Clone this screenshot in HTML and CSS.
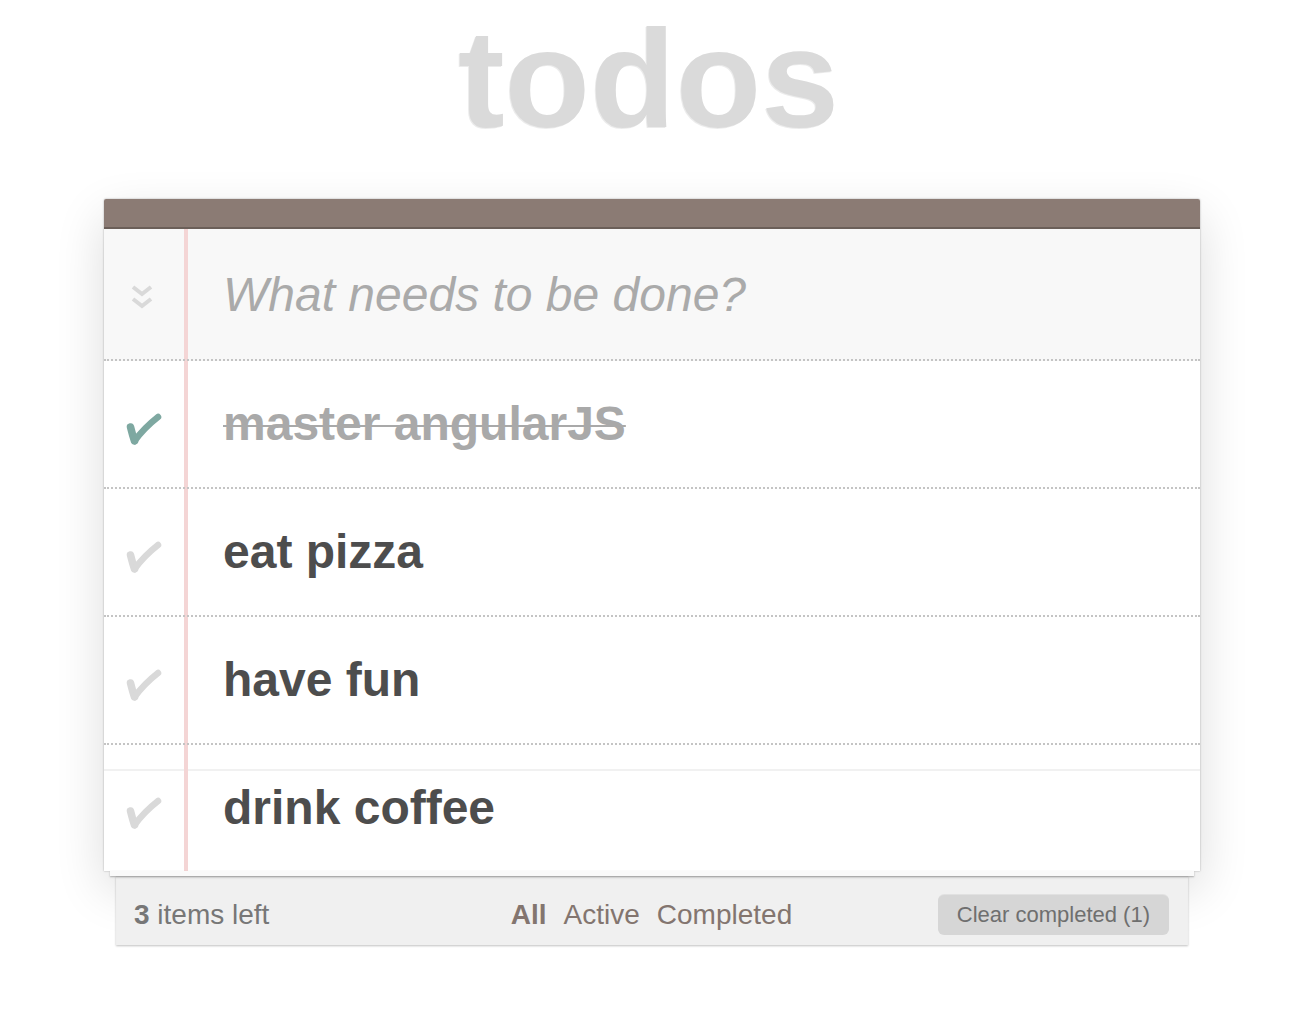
FILE: index.html
```html
<!DOCTYPE html>
<html lang="en">
<head>
<meta charset="utf-8">
<title>todos</title>
<link rel="stylesheet" href="styles.css">
</head>
<body>
<section class="todoapp">
  <h1 class="title">todos</h1>
  <div class="app">
    <div class="panel">
      <div class="panel-bar"></div>
      <div class="row row-new">
        <div class="gutter gutter-toggle">
          <svg class="chevrons" width="22" height="26" viewBox="0 0 22 26"><path d="M2 4 L11 11 L20 4 M2 16 L11 23 L20 16" fill="none" stroke="#d9d9d9" stroke-width="4"/></svg>
        </div>
        <input class="new-todo" type="text" placeholder="What needs to be done?">
      </div>
      <ul class="list">
        <li class="row item done">
          <div class="gutter gutter-check"><svg class="check" width="40" height="40" viewBox="0 0 40 40"><path d="M8.5 18 Q10.5 26 12.5 32" fill="none" stroke="currentColor" stroke-width="7.5" stroke-linecap="round"/><path d="M12.5 32 Q22 19 36 8" fill="none" stroke="currentColor" stroke-width="6.5" stroke-linecap="round"/></svg></div>
          <label class="label">master angularJS</label>
        </li>
        <li class="row item">
          <div class="gutter gutter-check"><svg class="check" width="40" height="40" viewBox="0 0 40 40"><path d="M8.5 18 Q10.5 26 12.5 32" fill="none" stroke="currentColor" stroke-width="7.5" stroke-linecap="round"/><path d="M12.5 32 Q22 19 36 8" fill="none" stroke="currentColor" stroke-width="6.5" stroke-linecap="round"/></svg></div>
          <label class="label">eat pizza</label>
        </li>
        <li class="row item">
          <div class="gutter gutter-check"><svg class="check" width="40" height="40" viewBox="0 0 40 40"><path d="M8.5 18 Q10.5 26 12.5 32" fill="none" stroke="currentColor" stroke-width="7.5" stroke-linecap="round"/><path d="M12.5 32 Q22 19 36 8" fill="none" stroke="currentColor" stroke-width="6.5" stroke-linecap="round"/></svg></div>
          <label class="label">have fun</label>
        </li>
        <li class="row item last">
          <div class="gutter gutter-check"><svg class="check" width="40" height="40" viewBox="0 0 40 40"><path d="M8.5 18 Q10.5 26 12.5 32" fill="none" stroke="currentColor" stroke-width="7.5" stroke-linecap="round"/><path d="M12.5 32 Q22 19 36 8" fill="none" stroke="currentColor" stroke-width="6.5" stroke-linecap="round"/></svg></div>
          <label class="label">drink coffee</label>
        </li>
      </ul>
    </div>
    <div class="sheet"></div>
    <footer class="footer">
      <span class="count"><strong>3</strong> items left</span>
      <ul class="filters">
        <li><a class="filter selected">All</a></li>
        <li><a class="filter">Active</a></li>
        <li><a class="filter">Completed</a></li>
      </ul>
      <button class="clear" type="button">Clear completed (1)</button>
    </footer>
  </div>
</section>
</body>
</html>
```

FILE: styles.css
```css
html, body {
  margin: 0;
  padding: 0;
  background: #ffffff;
}

body {
  font-family: "Liberation Sans", Arial, Helvetica, sans-serif;
  color: #4d4d4d;
}

.todoapp {
  width: 1096px;
  margin: 0 auto;
  padding-bottom: 60px;
  position: relative;
  left: -1px;
}

.title {
  margin: 9px 0 0;
  padding-right: 7px;
  font-size: 140px;
  line-height: 140px;
  font-weight: 700;
  text-align: center;
  color: #dadada;
  text-shadow: -1px 1px 0 rgba(0, 0, 0, 0.08);
}

.app {
  margin-top: 50px;
}

.panel {
  background: #ffffff;
  box-shadow: 0 0 2px rgba(0, 0, 0, 0.35), 0 18px 50px rgba(0, 0, 0, 0.14);
  border-radius: 2px 2px 0 0;
}

.panel-bar {
  height: 28px;
  background: #8b7b74;
  border-bottom: 2px solid #6b5f59;
  border-radius: 2px 2px 0 0;
}

.row {
  display: flex;
  align-items: center;
  background-image: linear-gradient(to right, transparent 80px, #f4d5d5 80px, #f4d5d5 84px, transparent 84px);
}

.row-new {
  height: 130px;
  background-color: #f8f8f8;
  border-bottom: 2px dotted #c4c4c4;
}

.gutter {
  width: 84px;
  flex: none;
  display: flex;
  align-items: center;
}

.gutter-toggle {
  padding-left: 27px;
  box-sizing: border-box;
  margin-top: 4px;
}

.chevrons {
  display: block;
}

.new-todo {
  flex: 1;
  border: 0;
  outline: none;
  background: transparent;
  margin: 0 0 0 35px;
  padding: 0;
  font-family: "Liberation Sans", Arial, Helvetica, sans-serif;
  font-size: 48px;
  font-style: italic;
  color: #4d4d4d;
  height: 60px;
}

.new-todo::placeholder {
  color: #aaaaaa;
  font-style: italic;
}

.list {
  list-style: none;
  margin: 0;
  padding: 0;
}

.item {
  height: 126px;
  background-color: #ffffff;
  border-bottom: 2px dotted #c4c4c4;
}

.item.last {
  border-bottom: 0;
  background-image: linear-gradient(to right, transparent 80px, #f4d5d5 80px, #f4d5d5 84px, transparent 84px),
    linear-gradient(to bottom, transparent 24px, #f1f1f1 24px, #f1f1f1 26px, transparent 26px);
}

.gutter-check {
  padding-left: 18px;
  box-sizing: border-box;
  margin-top: 9px;
  color: #d9d9d9;
}

.check {
  display: block;
}

.done .gutter-check {
  color: #7ea8a1;
}

.label {
  padding-left: 35px;
  font-size: 48px;
  font-weight: 700;
  color: #4d4d4d;
  line-height: 60px;
  white-space: nowrap;
}

.done .label {
  color: #a9a9a9;
  text-decoration: line-through;
  text-decoration-thickness: 2px;
}

.sheet {
  height: 5px;
  margin: 0 6px;
  background: #fafafa;
  box-shadow: 0 1px 2px rgba(0, 0, 0, 0.3);
  position: relative;
  z-index: 0;
}

.footer {
  margin: 0 12px;
  height: 69px;
  box-sizing: border-box;
  padding: 8px 19px 0 18px;
  background: #f0f0f0;
  box-shadow: 0 1px 2px rgba(0, 0, 0, 0.25), inset 0 3px 3px -2px rgba(0, 0, 0, 0.12);
  display: grid;
  grid-template-columns: 1fr auto 1fr;
  align-items: center;
  font-size: 28px;
  color: #777777;
}

.count strong {
  font-weight: 700;
}

.filters {
  list-style: none;
  margin: 0;
  padding: 0;
  display: flex;
  gap: 17px;
}

.filter {
  color: #83756f;
  text-decoration: none;
}

.filter.selected {
  font-weight: 700;
}

.clear {
  justify-self: end;
  height: 40px;
  padding: 0 19px;
  border: 0;
  border-radius: 6px;
  background: #d6d6d6;
  color: #6f6f6f;
  font-family: "Liberation Sans", Arial, Helvetica, sans-serif;
  font-size: 22px;
  box-shadow: 0 -1px 0 rgba(0, 0, 0, 0.06);
}
```
